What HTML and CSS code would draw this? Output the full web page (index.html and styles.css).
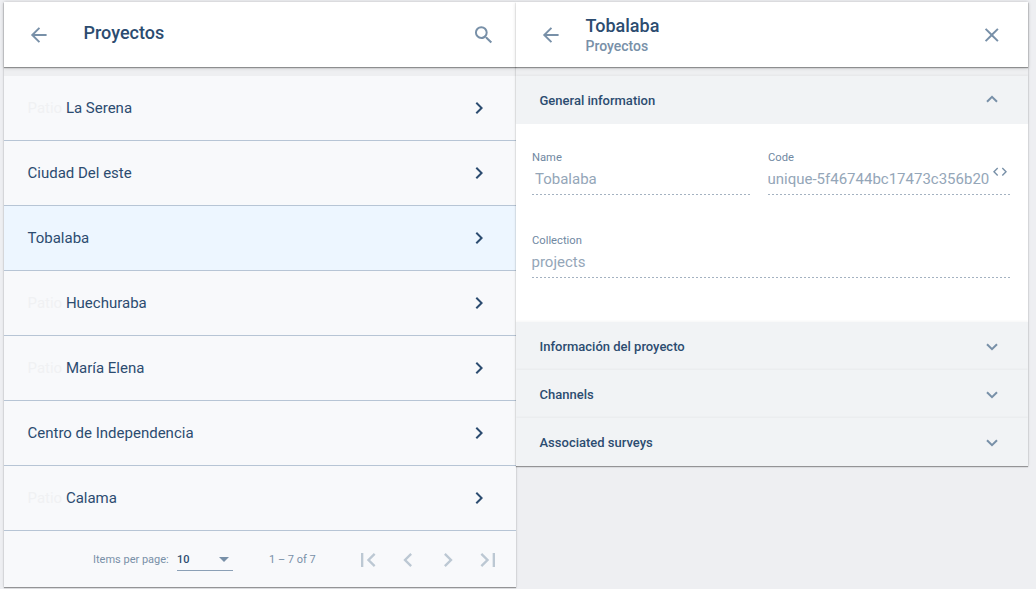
FILE: index.html
```html
<!DOCTYPE html>
<html lang="es">
<head>
<meta charset="utf-8">
<title>Proyectos</title>
<link rel="stylesheet" href="styles.css">
</head>
<body>
<svg class="defs" aria-hidden="true">
  <symbol id="back" viewBox="0 0 24 24"><path d="M20 11H7.83l5.59-5.59L12 4l-8 8 8 8 1.41-1.41L7.83 13H20v-2z"/></symbol>
  <symbol id="search" viewBox="0 0 24 24"><path d="M15.5 14h-.79l-.28-.27A6.471 6.471 0 0 0 16 9.5 6.5 6.5 0 1 0 9.5 16c1.61 0 3.09-.59 4.23-1.57l.27.28v.79l5 4.99L20.49 19l-4.99-5zm-6 0C7.01 14 5 11.99 5 9.5S7.01 5 9.5 5 14 7.01 14 9.5 11.99 14 9.5 14z"/></symbol>
  <symbol id="close" viewBox="0 0 24 24"><path d="M19 6.41 17.59 5 12 10.59 6.41 5 5 6.41 10.59 12 5 17.59 6.41 19 12 13.41 17.59 19 19 17.59 13.41 12z"/></symbol>
  <symbol id="right" viewBox="0 0 24 24"><path d="M10 6 8.59 7.41 13.17 12l-4.58 4.59L10 18l6-6z"/></symbol>
  <symbol id="left" viewBox="0 0 24 24"><path d="M15.41 7.41 14 6l-6 6 6 6 1.41-1.41L10.83 12z"/></symbol>
  <symbol id="first" viewBox="0 0 24 24"><path d="M18.41 16.59 13.82 12l4.59-4.59L17 6l-6 6 6 6zM6 6h2v12H6z"/></symbol>
  <symbol id="last" viewBox="0 0 24 24"><path d="M5.59 7.41 10.18 12l-4.59 4.59L7 18l6-6-6-6zM16 6h2v12h-2z"/></symbol>
  <symbol id="down" viewBox="0 0 12 8"><path d="M1 1.2 6 6.2l5-5" fill="none" stroke="currentColor" stroke-width="2"/></symbol>
  <symbol id="code" viewBox="0 0 14 10"><path d="M4.7 1 1 4.7l3.7 3.7M9.3 1 13 4.7 9.3 8.4" fill="none" stroke="currentColor" stroke-width="1.4"/></symbol>
</svg>
<main class="layout">
  <section class="panel list-panel">
    <header class="bar">
      <svg class="icon"><use href="#back"/></svg>
      <h1 class="title">Proyectos</h1>
      <svg class="icon"><use href="#search"/></svg>
    </header>
    <ul class="rows">
      <li class="row"><span><span class="faded">Patio</span> La Serena</span><svg class="icon"><use href="#right"/></svg></li>
      <li class="row"><span>Ciudad Del este</span><svg class="icon"><use href="#right"/></svg></li>
      <li class="row selected"><span>Tobalaba</span><svg class="icon"><use href="#right"/></svg></li>
      <li class="row"><span><span class="faded">Patio</span> Huechuraba</span><svg class="icon"><use href="#right"/></svg></li>
      <li class="row"><span><span class="faded">Patio</span> María Elena</span><svg class="icon"><use href="#right"/></svg></li>
      <li class="row"><span>Centro de Independencia</span><svg class="icon"><use href="#right"/></svg></li>
      <li class="row"><span><span class="faded">Patio</span> Calama</span><svg class="icon"><use href="#right"/></svg></li>
    </ul>
    <footer class="paginator">
      <span class="per-page">Items per page:</span>
      <span class="select">10<i class="caret"></i></span>
      <span class="range">1 – 7 of 7</span>
      <nav class="pages">
        <svg><use href="#first"/></svg>
        <svg><use href="#left"/></svg>
        <svg><use href="#right"/></svg>
        <svg><use href="#last"/></svg>
      </nav>
    </footer>
  </section>
  <section class="panel detail-panel">
    <header class="bar">
      <svg class="icon"><use href="#back"/></svg>
      <div class="heading">
        <h1 class="title">Tobalaba</h1>
        <p class="subtitle">Proyectos</p>
      </div>
      <svg class="icon"><use href="#close"/></svg>
    </header>
    <div class="accordion">
      <h2 class="section open">General information<svg class="chevron"><use href="#down"/></svg></h2>
      <div class="form">
        <div class="field"><label class="label">Name</label><div class="value indented">Tobalaba</div></div>
        <div class="field"><label class="label">Code</label><div class="value"><span class="code-text">unique-5f46744bc17473c356b20</span><svg class="code-icon"><use href="#code"/></svg></div></div>
        <div class="field wide"><label class="label">Collection</label><div class="value">projects</div></div>
      </div>
      <h2 class="section">Información del proyecto<svg class="chevron"><use href="#down"/></svg></h2>
      <h2 class="section">Channels<svg class="chevron"><use href="#down"/></svg></h2>
      <h2 class="section">Associated surveys<svg class="chevron"><use href="#down"/></svg></h2>
    </div>
  </section>
</main>
</body>
</html>
```

FILE: styles.css
```css
* { box-sizing: border-box; margin: 0; padding: 0; }
body {
  height: 589px;
  overflow: hidden;
  background: #eeeff2;
  color: #2c4c70;
  font-family: Roboto, "Liberation Sans", sans-serif;
}
.defs { display: none; }
svg { fill: currentColor; flex: none; display: block; }
.layout { display: flex; align-items: flex-start; padding: 2px 0 0 4px; }
.panel {
  width: 512px;
  background: #eeeff1;
  box-shadow: 0 1px 1px rgba(0,0,0,.35), 0 0 3px rgba(0,0,0,.12);
}
.bar {
  position: relative;
  display: flex;
  height: 65px;
  padding: 21px 21px 0 23.4px;
  background: #fff;
  box-shadow: 0 1px 1px rgba(0,0,0,.35), 0 1px 4px rgba(0,0,0,.15);
}
.icon { width: 24px; height: 24px; color: #7890a8; }
.bar .icon { width: 23.5px; }
.title { flex: 1; font-size: 18px; line-height: 21px; font-weight: 500; }
.list-panel .title { margin: -1px 0 0 32.6px; }
.heading { flex: 1; margin: -8px 0 0 22.6px; }
.detail-panel .bar { padding-right: 25px; }
.subtitle { font-size: 14px; line-height: 20px; font-weight: 500; color: #7890a8; }
.rows { list-style: none; margin-top: 9px; }
.row {
  display: flex;
  align-items: center;
  justify-content: space-between;
  height: 65px;
  padding: 0 25px 0 23.5px;
  border-bottom: 1px solid #b7c5d5;
  background: #f8f9fb;
  font-size: 15px;
}
.row .icon { color: #2c4c70; }
.selected { background: #edf6ff; }
.faded { color: #f0f1f3; }
.paginator {
  display: flex;
  align-items: center;
  height: 56px;
  padding-left: 89px;
  background: #f8f9fb;
  color: #7890a8;
  font-size: 11px;
}
.per-page { width: 84px; white-space: nowrap; }
.select {
  display: flex;
  align-items: center;
  justify-content: space-between;
  width: 56px;
  height: 22px;
  margin-top: 2px;
  padding: 0 4px 0 0;
  border-bottom: 1px solid #8ba0b6;
  color: #2c4c70;
  font-weight: 500;
}
.caret { margin-top: -1px; border: 5px solid transparent; border-top-color: #7890a8; border-bottom: 0; }
.range { width: 79px; margin-left: 36px; white-space: nowrap; }
.pages { display: flex; gap: 12px; margin: 2px 0 0 6px; color: #bcc8d3; }
.pages svg { width: 28px; height: 28px; }
.accordion { margin-top: 9px; }
.section {
  display: flex;
  align-items: center;
  justify-content: space-between;
  height: 48px;
  padding: 0 30px 0 23.5px;
  background: #f1f3f5;
  box-shadow: 0 -1px 2px rgba(0,0,0,.04);
  font-size: 13px;
  font-weight: 500;
}
.chevron { width: 12px; height: 8px; margin-top: 2px; color: #7890a8; }
.open .chevron { transform: rotate(180deg); margin-top: -2px; }
.form {
  display: grid;
  grid-template-columns: 219px 243px;
  column-gap: 17px;
  row-gap: 32px;
  height: 198px;
  padding: 20px 17px 0 16px;
  align-content: start;
  background: #fff;
}
.field { min-width: 0; height: 51px; }
.wide { grid-column: span 2; }
.label { display: block; margin: 7px 0 3px; font-size: 11.2px; line-height: 14px; color: #7088a2; }
.value {
  display: flex;
  height: 27px;
  padding-top: 1px;
  font-size: 15px;
  line-height: 20px;
  color: #94a6b8;
  background: repeating-linear-gradient(to right, #a4b2c1 0 2px, transparent 2px 4px) bottom / 100% 1px no-repeat;
}
.value { text-indent: -0.5px; }
.indented { padding-left: 3.5px; }
.code-text { width: 220.5px; overflow: hidden; white-space: nowrap; }
.code-icon { width: 14px; height: 10px; margin: -2px 0 0 4px; color: #7890a8; }
```
